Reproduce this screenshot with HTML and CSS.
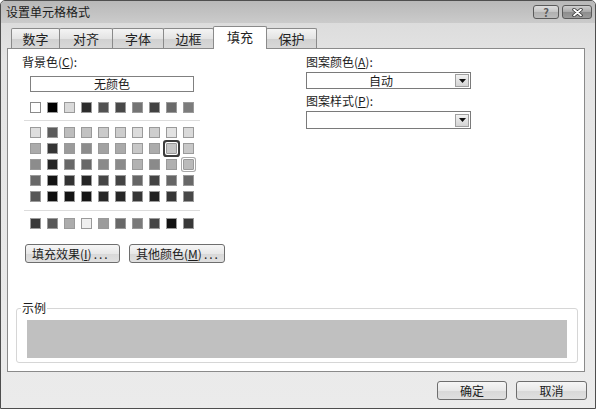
FILE: index.html
```html
<!DOCTYPE html>
<html lang="zh-CN">
<head>
<meta charset="utf-8">
<title>设置单元格格式</title>
<link rel="stylesheet" href="styles.css">
</head>
<body>
<div class="window">
  <div class="titlebar">
    <span class="title">设置单元格格式</span>
    <div class="tb-buttons">
      <span class="tb-btn help">?</span>
      <span class="tb-btn close">
        <svg width="11" height="9" viewBox="0 0 11 9"><path d="M2 1.5 L9 7.5 M9 1.5 L2 7.5" stroke="#333" stroke-width="3.4" stroke-linecap="round"/><path d="M2 1.5 L9 7.5 M9 1.5 L2 7.5" stroke="#fff" stroke-width="1.8" stroke-linecap="round"/></svg>
      </span>
    </div>
  </div>
  <div class="tabs">
    <span class="tab t1">数字</span>
    <span class="tab t2">对齐</span>
    <span class="tab t3">字体</span>
    <span class="tab t4">边框</span>
    <span class="tab t5 active">填充</span>
    <span class="tab t6">保护</span>
  </div>
  <div class="panel">
    <div class="top">
      <div class="left">
        <div class="label">背景色(<u>C</u>):</div>
        <div class="nocolor">无颜色</div>
        <div class="swrow row1">
          <span class="sw" style="background:#ffffff;border-color:#8a8a8a"></span>
          <span class="sw" style="background:#000000"></span>
          <span class="sw" style="background:#dadada"></span>
          <span class="sw" style="background:#2c2c2c"></span>
          <span class="sw" style="background:#525252"></span>
          <span class="sw" style="background:#484848"></span>
          <span class="sw" style="background:#747474"></span>
          <span class="sw" style="background:#424242"></span>
          <span class="sw" style="background:#6a6a6a"></span>
          <span class="sw" style="background:#7c7c7c"></span>
        </div>
        <div class="sep"></div>
        <div class="grid">
          <div class="swrow">
            <span class="sw" style="background:#dedede"></span>
            <span class="sw" style="background:#5c5c5c"></span>
            <span class="sw" style="background:#bdbdbd"></span>
            <span class="sw" style="background:#c2c2c2"></span>
            <span class="sw" style="background:#cacaca"></span>
            <span class="sw" style="background:#cdcdcd"></span>
            <span class="sw" style="background:#dcdcdc"></span>
            <span class="sw" style="background:#cecece"></span>
            <span class="sw" style="background:#e2e2e2"></span>
            <span class="sw" style="background:#dadada"></span>
          </div>
          <div class="swrow">
            <span class="sw" style="background:#ababab"></span>
            <span class="sw" style="background:#353535"></span>
            <span class="sw" style="background:#9b9b9b"></span>
            <span class="sw" style="background:#8c8c8c"></span>
            <span class="sw" style="background:#a2a2a2"></span>
            <span class="sw" style="background:#aaaaaa"></span>
            <span class="sw" style="background:#c8c8c8"></span>
            <span class="sw" style="background:#acacac"></span>
            <span class="sw selected" style="background:#c6c6c6"></span>
            <span class="sw" style="background:#c8c8c8"></span>
          </div>
          <div class="swrow">
            <span class="sw" style="background:#8c8c8c"></span>
            <span class="sw" style="background:#242424"></span>
            <span class="sw" style="background:#686868"></span>
            <span class="sw" style="background:#686868"></span>
            <span class="sw" style="background:#8a8a8a"></span>
            <span class="sw" style="background:#8a8a8a"></span>
            <span class="sw" style="background:#b2b2b2"></span>
            <span class="sw" style="background:#8a8a8a"></span>
            <span class="sw" style="background:#b0b0b0"></span>
            <span class="sw hover" style="background:#bababa"></span>
          </div>
          <div class="swrow">
            <span class="sw" style="background:#686868"></span>
            <span class="sw" style="background:#141414"></span>
            <span class="sw" style="background:#333333"></span>
            <span class="sw" style="background:#252525"></span>
            <span class="sw" style="background:#464646"></span>
            <span class="sw" style="background:#444444"></span>
            <span class="sw" style="background:#666666"></span>
            <span class="sw" style="background:#444444"></span>
            <span class="sw" style="background:#666666"></span>
            <span class="sw" style="background:#686868"></span>
          </div>
          <div class="swrow">
            <span class="sw" style="background:#565656"></span>
            <span class="sw" style="background:#0e0e0e"></span>
            <span class="sw" style="background:#141414"></span>
            <span class="sw" style="background:#141414"></span>
            <span class="sw" style="background:#262626"></span>
            <span class="sw" style="background:#262626"></span>
            <span class="sw" style="background:#363636"></span>
            <span class="sw" style="background:#222222"></span>
            <span class="sw" style="background:#363636"></span>
            <span class="sw" style="background:#484848"></span>
          </div>
        </div>
        <div class="sep sep2"></div>
        <div class="swrow lastrow">
          <span class="sw" style="background:#383838"></span>
          <span class="sw" style="background:#585858"></span>
          <span class="sw" style="background:#acacac"></span>
          <span class="sw" style="background:#f0f0f0"></span>
          <span class="sw" style="background:#9c9c9c"></span>
          <span class="sw" style="background:#686868"></span>
          <span class="sw" style="background:#7a7a7a"></span>
          <span class="sw" style="background:#464646"></span>
          <span class="sw" style="background:#111111"></span>
          <span class="sw" style="background:#383838"></span>
        </div>
        <div class="btnrow">
          <button class="btn fx">填充效果(<u>I</u>)<span class="dots">...</span></button>
          <button class="btn more">其他颜色(<u>M</u>)<span class="dots">...</span></button>
        </div>
      </div>
      <div class="right">
        <div class="label">图案颜色(<u>A</u>):</div>
        <div class="combo">
          <span class="val">自动</span>
          <span class="arrow"><svg width="7" height="4" viewBox="0 0 7 4"><path d="M0 0 H7 L3.5 4 Z" fill="#111"/></svg></span>
        </div>
        <div class="label label2">图案样式(<u>P</u>):</div>
        <div class="combo combo2">
          <span class="val"></span>
          <span class="arrow"><svg width="7" height="4" viewBox="0 0 7 4"><path d="M0 0 H7 L3.5 4 Z" fill="#111"/></svg></span>
        </div>
      </div>
    </div>
    <fieldset class="example">
      <legend>示例</legend>
      <div class="sample"></div>
    </fieldset>
  </div>
  <div class="footer">
    <button class="btn ok">确定</button>
    <button class="btn cancel">取消</button>
  </div>
</div>
</body>
</html>
```
FILE: styles.css
```css
body {
  margin: 0;
  font-family: "Noto Sans CJK SC", "DejaVu Sans", sans-serif;
  font-size: 12px;
  color: #1c1c1c;
}

.window {
  width: 596px;
  height: 409px;
  box-sizing: border-box;
  border: 1px solid #4e4e4e;
  border-radius: 5px 5px 0 0;
  background: linear-gradient(#d8d8d8, #e4e4e4 60px, #ebebeb);
  overflow: hidden;
}

.titlebar {
  height: 22px;
  display: flex;
  align-items: center;
  justify-content: space-between;
  padding: 0 3px 0 5px;
  background: linear-gradient(#b8b8b8, #cbcbcb);
}

.title {
  font-size: 12px;
  line-height: 22px;
  color: #1a1a1a;
}

.tb-buttons {
  display: flex;
  gap: 3px;
}

.tb-btn {
  height: 14px;
  box-sizing: border-box;
  border: 1px solid #5a5a5a;
  border-radius: 3px;
  display: flex;
  align-items: center;
  justify-content: center;
}

.help {
  width: 26px;
  background: linear-gradient(#dedede, #c4c4c4 50%, #b0b0b0 51%, #bcbcbc);
  font-size: 11px;
  font-weight: bold;
  color: #5a5a5a;
  line-height: 12px;
}

.close {
  width: 30px;
  background: linear-gradient(#cfcfcf, #a8a8a8 50%, #8c8c8c 51%, #9c9c9c);
}

.tabs {
  height: 25px;
  display: flex;
  align-items: flex-end;
  padding-left: 11px;
}

.tab {
  height: 20px;
  box-sizing: border-box;
  border: 1px solid #8a8a8a;
  border-bottom: none;
  border-radius: 2px 2px 0 0;
  margin-left: -1px;
  background: linear-gradient(#f4f4f4, #e4e4e4 50%, #d0d0d0 51%, #d8d8d8);
  display: flex;
  align-items: center;
  justify-content: center;
  font-size: 13px;
  line-height: 16px;
  color: #222;
}

.t1 { width: 49px; }
.t2 { width: 54px; }
.t3 { width: 52px; }
.t4 { width: 51px; }
.t5 { width: 54px; }
.t6 { width: 51px; }

.tab.active {
  height: 23px;
  margin-bottom: -1px;
  background: #ffffff;
  position: relative;
  z-index: 1;
  padding-bottom: 2px;
}

.panel {
  margin-left: 6px;
  width: 578px;
  height: 324px;
  box-sizing: border-box;
  border: 1px solid #8a8a8a;
  background: #ffffff;
  padding: 6px 6px 8px 8px;
  display: flex;
  flex-direction: column;
}

.top {
  display: flex;
}

.left {
  margin-left: 6px;
  width: 284px;
}

.right {
  width: 166px;
}

.label {
  height: 14px;
  line-height: 14px;
  white-space: nowrap;
}

.nocolor {
  margin: 7px 0 0 8px;
  width: 164px;
  height: 16px;
  box-sizing: border-box;
  border: 1px solid #808080;
  text-align: center;
  line-height: 14px;
}

.swrow {
  display: flex;
  gap: 6px;
  margin-left: 8px;
}

.sw {
  width: 11px;
  height: 11px;
  box-sizing: border-box;
  border: 1px solid #9a9a9a;
}

.sw.selected {
  border-radius: 1px;
  box-shadow: 0 0 0 1px #ffffff, 0 0 0 3px #3c3c3c;
}

.sw.hover {
  border-radius: 1px;
  box-shadow: 0 0 0 1px #ffffff, 0 0 0 2px #a8a8a8;
}

.row1 {
  margin-top: 10px;
}

.sep {
  height: 1px;
  width: 176px;
  margin: 7px 0 0 2px;
  background: #dcdcdc;
}

.grid {
  display: flex;
  flex-direction: column;
  gap: 5px;
  margin-top: 6px;
}

.sep2 {
  margin-top: 8px;
}

.lastrow {
  margin-top: 7px;
}

.btnrow {
  display: flex;
  gap: 9px;
  margin: 15px 0 0 3px;
}

.btn {
  height: 19px;
  box-sizing: border-box;
  border: 1px solid #6e6e6e;
  border-radius: 3px;
  background: linear-gradient(#f6f6f6, #e8e8e8 50%, #d8d8d8 51%, #e0e0e0);
  font-family: "Noto Sans CJK SC", "DejaVu Sans", sans-serif;
  font-size: 12px;
  line-height: 15px;
  color: #1c1c1c;
  padding: 0;
  white-space: nowrap;
}

.fx, .more {
  text-align: left;
  padding-left: 6px;
}

.fx { width: 95px; }
.more { width: 96px; }

.dots {
  letter-spacing: 2px;
  margin-left: 2px;
}

.combo {
  margin-top: 3px;
  width: 165px;
  height: 17px;
  box-sizing: border-box;
  border: 1px solid #7a7a7a;
  display: flex;
  align-items: center;
}

.combo2 {
  height: 18px;
}

.val {
  flex: 1;
  text-align: center;
  line-height: 14px;
}

.arrow {
  width: 14px;
  height: 13px;
  margin-right: 1px;
  box-sizing: border-box;
  border: 1px solid #a0a0a0;
  background: linear-gradient(#f2f2f2, #d4d4d4);
  display: flex;
  align-items: center;
  justify-content: center;
}

.label2 {
  margin-top: 5px;
}

.example {
  margin: auto 0 0 0;
  width: 562px;
  box-sizing: border-box;
  border: 1px solid #d6d6d6;
  border-radius: 3px;
  padding: 5px 10px 4px 10px;
  min-width: 0;
}

.example legend {
  margin-left: -6px;
  padding: 0 1px;
  line-height: 14px;
  font-size: 12px;
}

.sample {
  height: 38px;
  background: #c0c0c0;
}

.footer {
  display: flex;
  justify-content: flex-end;
  gap: 9px;
  padding: 9px 8px 0 0;
}

.ok { width: 70px; }
.cancel { width: 71px; }
```
